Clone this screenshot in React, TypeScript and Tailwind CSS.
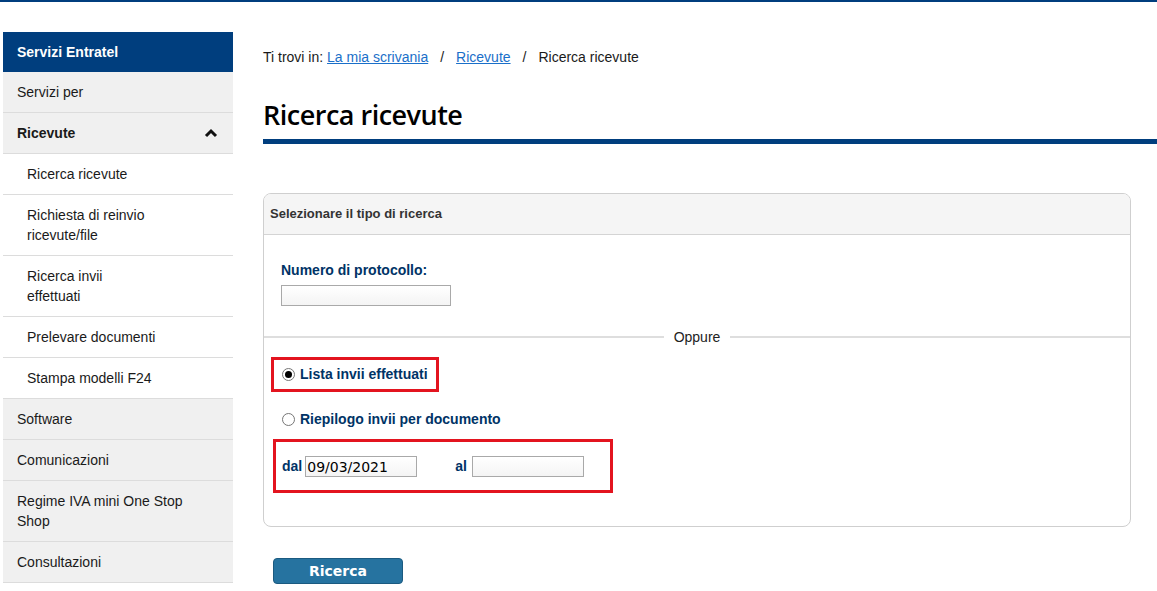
import React from 'react';

const menu = [
  { label: 'Servizi per', level: 0 },
  { label: 'Ricevute', level: 0, open: true },
  { label: 'Ricerca ricevute', level: 1 },
  { label: 'Richiesta di reinvio', label2: 'ricevute/file', level: 1 },
  { label: 'Ricerca invii', label2: 'effettuati', level: 1 },
  { label: 'Prelevare documenti', level: 1 },
  { label: 'Stampa modelli F24', level: 1 },
  { label: 'Software', level: 0 },
  { label: 'Comunicazioni', level: 0 },
  { label: 'Regime IVA mini One Stop', label2: 'Shop', level: 0 },
  { label: 'Consultazioni', level: 0 },
];

function Radio({ checked }: { checked?: boolean }) {
  return (
    <span className="w-[13px] h-[13px] rounded-full border border-[#767676] bg-white flex items-center justify-center shrink-0">
      {checked && <span className="w-[7px] h-[7px] rounded-full bg-black" />}
    </span>
  );
}

export default function App() {
  return (
    <div className="min-h-screen bg-white font-['Liberation_Sans',Arial,sans-serif] text-[14px] text-[#1a1a1a] overflow-hidden">
      <div className="h-[2px] bg-[#003e7e]" />
      <div className="flex pt-[30px]">
        {/* Sidebar */}
        <div className="w-[230px] ml-[3px] shrink-0">
          <div className="h-[40px] bg-[#003e7e] text-white font-bold px-[14px] flex items-center">Servizi Entratel</div>
          {menu.map((m) => (
            <div
              key={m.label}
              className={`border-b border-[#dcdcdc] py-[10px] leading-[20px] flex items-center justify-between ${
                m.level === 0 ? 'bg-[#f0f0f0] pl-[14px] pr-[14px]' : 'bg-white pl-[24px]'
              } ${m.open ? 'font-bold' : ''}`}
            >
              <div>
                <div>{m.label}</div>
                {m.label2 && <div>{m.label2}</div>}
              </div>
              {m.open && (
                <svg width="14" height="10" viewBox="0 0 14 10" className="mr-[1px]">
                  <polyline points="2,8 7,3 12,8" fill="none" stroke="#111" strokeWidth="3" />
                </svg>
              )}
            </div>
          ))}
        </div>

        {/* Main */}
        <div className="flex-1 ml-[30px]">
          <div className="pt-[16px] leading-[18px] flex items-center">
            <span>Ti trovi in:&nbsp;</span>
            <span className="text-[#1a6fc9] underline">La mia scrivania</span>
            <span className="mx-[12px]">/</span>
            <span className="text-[#1a6fc9] underline">Ricevute</span>
            <span className="mx-[12px]">/</span>
            <span>Ricerca ricevute</span>
          </div>
          <h1 className="mt-[31px] font-['Open_Sans',sans-serif] font-semibold text-[27px] leading-[36px] text-black tracking-[-0.5px]">
            Ricerca ricevute
          </h1>
          <div className="h-[5px] bg-[#003e7e] mt-[6px]" />

          <div className="mt-[49px] mr-[26px] border border-[#cfcfcf] rounded-[8px] overflow-hidden">
            <div className="h-[41px] bg-[#f5f5f5] border-b border-[#d4d4d4] flex items-center px-[6px] text-[13px] font-bold text-[#333]">
              Selezionare il tipo di ricerca
            </div>
            <div className="pt-[27px] pb-[33px]">
              <div className="pl-[17px]">
                <div className="text-[#003366] font-bold text-[14px] leading-[16px]">Numero di protocollo:</div>
                <div className="mt-[7px] w-[170px] h-[21px] border border-[#a9a9a9] bg-gradient-to-b from-white to-[#f4f4f4]" />
              </div>
              <div className="flex items-center mt-[23px]">
                <div className="flex-1 h-[2px] bg-[#dedede]" />
                <span className="px-[10px] text-[14px] text-[#222] leading-[16px]">Oppure</span>
                <div className="flex-1 h-[2px] bg-[#dedede]" />
              </div>
              <div className="pl-[7px] mt-[12px]">
                <div className="w-[168px] h-[35px] border-[3px] border-[#e3141f] flex items-center gap-[5px] pl-[8px]">
                  <Radio checked />
                  <span className="text-[#003366] font-bold">Lista invii effettuati</span>
                </div>
                <div className="h-[35px] flex items-center gap-[5px] pl-[11px] mt-[10px]">
                  <Radio />
                  <span className="text-[#003366] font-bold">Riepilogo invii per documento</span>
                </div>
                <div className="ml-[2px] mt-[2px] w-[340px] h-[54px] border-[3px] border-[#e3141f] flex items-center pl-[6px]">
                  <span className="text-[#003366] font-bold mr-[3px]">dal</span>
                  <div className="w-[112px] h-[21px] border border-[#a9a9a9] bg-gradient-to-b from-white to-[#f4f4f4] flex items-end pl-[1px] font-['DejaVu_Sans',sans-serif] text-[14px] leading-[18px] text-black">
                    09/03/2021
                  </div>
                  <span className="text-[#003366] font-bold ml-[38px] mr-[5px]">al</span>
                  <div className="w-[112px] h-[21px] border border-[#a9a9a9] bg-gradient-to-b from-white to-[#f4f4f4]" />
                </div>
              </div>
            </div>
          </div>

          <button className="mt-[31px] ml-[10px] w-[130px] h-[26px] bg-[#2673a0] border border-[#1b5a80] rounded-[4px] text-white font-bold font-['DejaVu_Sans',sans-serif] text-[14px] leading-[20px]">
            Ricerca
          </button>
        </div>
      </div>
    </div>
  );
}
